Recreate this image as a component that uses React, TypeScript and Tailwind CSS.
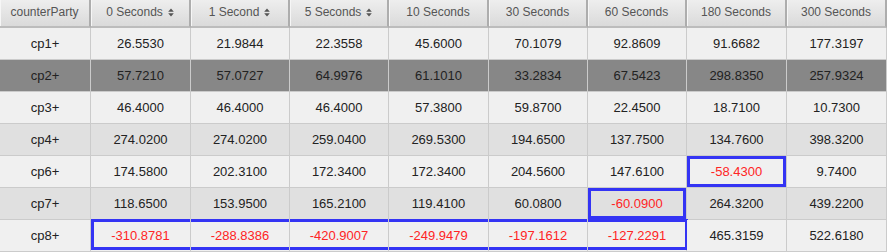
import React from "react";

type Box = "full" | "first" | "mid" | "last" | undefined;

const headers: { label: string; sort?: boolean }[] = [
  { label: "counterParty" },
  { label: "0 Seconds", sort: true },
  { label: "1 Second", sort: true },
  { label: "5 Seconds", sort: true },
  { label: "10 Seconds" },
  { label: "30 Seconds" },
  { label: "60 Seconds" },
  { label: "180 Seconds" },
  { label: "300 Seconds" },
];

const rows: string[][] = [
  ["cp1+", "26.5530", "21.9844", "22.3558", "45.6000", "70.1079", "92.8609", "91.6682", "177.3197"],
  ["cp2+", "57.7210", "57.0727", "64.9976", "61.1010", "33.2834", "67.5423", "298.8350", "257.9324"],
  ["cp3+", "46.4000", "46.4000", "46.4000", "57.3800", "59.8700", "22.4500", "18.7100", "10.7300"],
  ["cp4+", "274.0200", "274.0200", "259.0400", "269.5300", "194.6500", "137.7500", "134.7600", "398.3200"],
  ["cp6+", "174.5800", "202.3100", "172.3400", "172.3400", "204.5600", "147.6100", "-58.4300", "9.7400"],
  ["cp7+", "118.6500", "153.9500", "165.2100", "119.4100", "60.0800", "-60.0900", "264.3200", "439.2200"],
  ["cp8+", "-310.8781", "-288.8386", "-420.9007", "-249.9479", "-197.1612", "-127.2291", "465.3159", "522.6180"],
];

function boxFor(r: number, c: number): Box {
  if (r === 4 && c === 7) return "full";
  if (r === 5 && c === 6) return "full";
  if (r === 6) {
    if (c === 1) return "first";
    if (c > 1 && c < 6) return "mid";
    if (c === 6) return "last";
  }
  return undefined;
}

function SortIcon() {
  return (
    <svg width="6" height="9" viewBox="0 0 6 9" className="ml-[5px] inline-block">
      <path d="M3 0.5 L5.8 3.8 L0.2 3.8 Z" fill="#555" />
      <path d="M3 8.5 L5.8 5.2 L0.2 5.2 Z" fill="#555" />
    </svg>
  );
}

function Overlay({ box }: { box: Box }) {
  if (!box) return null;
  if (box === "full")
    return <div className="pointer-events-none absolute inset-0 border-[3px] border-[#3434f4]" />;
  if (box === "first")
    return <div className="pointer-events-none absolute -top-px left-0 right-0 bottom-px border-y-[3px] border-l-[3px] border-[#3434f4]" />;
  if (box === "mid")
    return <div className="pointer-events-none absolute -top-px left-0 right-0 bottom-px border-y-[3px] border-[#3434f4]" />;
  return <div className="pointer-events-none absolute -top-px left-0 -right-[2px] bottom-px border-y-[3px] border-r-[3px] border-[#3434f4]" />;
}

export default function App() {
  return (
    <div
      className="w-[887px] h-[252px] overflow-hidden bg-[#f0f0f0]"
      style={{ fontFamily: '"Liberation Sans", Arial, sans-serif' }}
    >
      <div className="grid grid-cols-[91px_100px_99px_99px_100px_99px_99px_100px_100px]">
        {headers.map((h) => (
          <div
            key={h.label}
            className="flex h-[28px] items-center justify-center border-b-2 border-r-2 border-b-[#bcbcbc] border-r-[#adadad] bg-gradient-to-b from-[#eeeeee] to-[#dadada] pb-[2px] text-[12px] text-[#555] shadow-[inset_1px_0_0_#f6f6f6]"
          >
            <span>{h.label}</span>
            {h.sort && <SortIcon />}
          </div>
        ))}
        {rows.map((row, r) => {
          const bg = r === 1 ? "bg-[#878787]" : r % 2 === 1 ? "bg-[#e0e0e0]" : "bg-[#f0f0f0]";
          return row.map((v, c) => {
            const neg = v.startsWith("-");
            const box = boxFor(r, c);
            return (
              <div
                key={`${r}-${c}`}
                className={`relative flex h-[32px] items-center justify-center border-b border-r border-[#cbcbcb] text-[13px] ${bg} ${
                  neg ? "text-[#ff2424]" : "text-[#222]"
                }`}
              >
                {v}
                <Overlay box={box} />
              </div>
            );
          });
        })}
      </div>
    </div>
  );
}
